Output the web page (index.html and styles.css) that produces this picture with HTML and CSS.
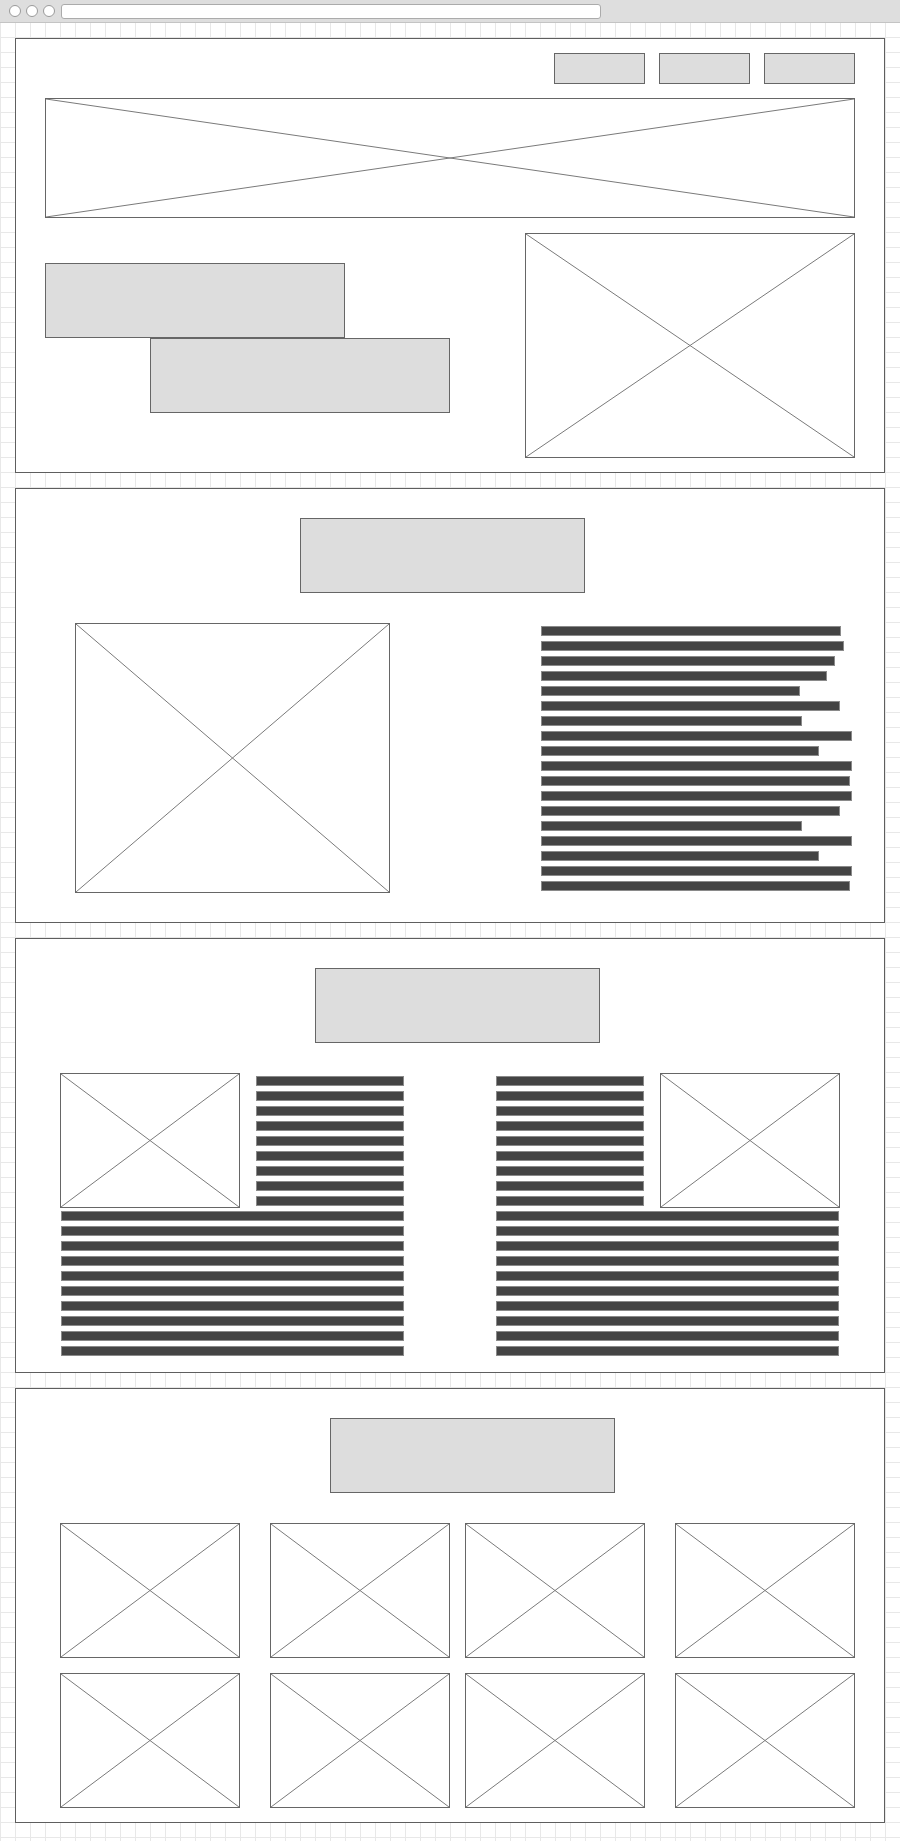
FILE: index.html
```html
<!DOCTYPE html>
<html lang="en">
  <head>
    <meta charset="utf-8" />
    <title>Wireframe</title>
    <link rel="stylesheet" href="styles.css">
  </head>
  <body>
    <div class="browser-bar">
      <span class="dot"></span>
      <span class="dot"></span>
      <span class="dot"></span>
      <span class="address"></span>
    </div>

    <main>

      <!-- header: nav + banner + hero -->
      <section class="Hero">
        <nav>
          <div class="box"></div>
          <div class="box"></div>
          <div class="box"></div>
        </nav>
        <div class="ph banner"><svg viewBox="0 0 100 100" preserveAspectRatio="none"><path d="M0 0L100 100M100 0L0 100"/></svg></div>
        <div class="hero-row">
          <div class="hero-titles">
            <div class="box"></div>
            <div class="box shifted"></div>
          </div>
          <div class="ph hero-img"><svg viewBox="0 0 100 100" preserveAspectRatio="none"><path d="M0 0L100 100M100 0L0 100"/></svg></div>
        </div>
      </section>

      <!-- image + text -->
      <section class="Feature">
        <div class="box title"></div>
        <div class="feature-row">
          <div class="ph feature-img"><svg viewBox="0 0 100 100" preserveAspectRatio="none"><path d="M0 0L100 100M100 0L0 100"/></svg></div>
          <div class="lines">
            <div class="bar" style="width:300px"></div>
            <div class="bar" style="width:303px"></div>
            <div class="bar" style="width:294px"></div>
            <div class="bar" style="width:286px"></div>
            <div class="bar" style="width:259px"></div>
            <div class="bar" style="width:299px"></div>
            <div class="bar" style="width:261px"></div>
            <div class="bar" style="width:311px"></div>
            <div class="bar" style="width:278px"></div>
            <div class="bar" style="width:311px"></div>
            <div class="bar" style="width:309px"></div>
            <div class="bar" style="width:311px"></div>
            <div class="bar" style="width:299px"></div>
            <div class="bar" style="width:261px"></div>
            <div class="bar" style="width:311px"></div>
            <div class="bar" style="width:278px"></div>
            <div class="bar" style="width:311px"></div>
            <div class="bar" style="width:309px"></div>
          </div>
        </div>
      </section>

      <!-- two articles, text wrapping around images -->
      <section class="Articles">
        <div class="box title"></div>
        <div class="articles-row">
          <article class="left">
            <div class="ph thumb"><svg viewBox="0 0 100 100" preserveAspectRatio="none"><path d="M0 0L100 100M100 0L0 100"/></svg></div>
            <div class="bar"></div><div class="bar"></div><div class="bar"></div><div class="bar"></div><div class="bar"></div>
            <div class="bar"></div><div class="bar"></div><div class="bar"></div><div class="bar"></div><div class="bar"></div>
            <div class="bar"></div><div class="bar"></div><div class="bar"></div><div class="bar"></div><div class="bar"></div>
            <div class="bar"></div><div class="bar"></div><div class="bar"></div><div class="bar"></div>
          </article>
          <article class="right">
            <div class="ph thumb"><svg viewBox="0 0 100 100" preserveAspectRatio="none"><path d="M0 0L100 100M100 0L0 100"/></svg></div>
            <div class="bar"></div><div class="bar"></div><div class="bar"></div><div class="bar"></div><div class="bar"></div>
            <div class="bar"></div><div class="bar"></div><div class="bar"></div><div class="bar"></div><div class="bar"></div>
            <div class="bar"></div><div class="bar"></div><div class="bar"></div><div class="bar"></div><div class="bar"></div>
            <div class="bar"></div><div class="bar"></div><div class="bar"></div><div class="bar"></div>
          </article>
        </div>
      </section>

      <!-- gallery -->
      <section class="Gallery">
        <div class="box title"></div>
        <div class="gallery-row">
          <div class="gallery-group">
            <div class="ph thumb"><svg viewBox="0 0 100 100" preserveAspectRatio="none"><path d="M0 0L100 100M100 0L0 100"/></svg></div>
            <div class="ph thumb"><svg viewBox="0 0 100 100" preserveAspectRatio="none"><path d="M0 0L100 100M100 0L0 100"/></svg></div>
            <div class="ph thumb"><svg viewBox="0 0 100 100" preserveAspectRatio="none"><path d="M0 0L100 100M100 0L0 100"/></svg></div>
            <div class="ph thumb"><svg viewBox="0 0 100 100" preserveAspectRatio="none"><path d="M0 0L100 100M100 0L0 100"/></svg></div>
          </div>
          <div class="gallery-group">
            <div class="ph thumb"><svg viewBox="0 0 100 100" preserveAspectRatio="none"><path d="M0 0L100 100M100 0L0 100"/></svg></div>
            <div class="ph thumb"><svg viewBox="0 0 100 100" preserveAspectRatio="none"><path d="M0 0L100 100M100 0L0 100"/></svg></div>
            <div class="ph thumb"><svg viewBox="0 0 100 100" preserveAspectRatio="none"><path d="M0 0L100 100M100 0L0 100"/></svg></div>
            <div class="ph thumb"><svg viewBox="0 0 100 100" preserveAspectRatio="none"><path d="M0 0L100 100M100 0L0 100"/></svg></div>
          </div>
        </div>
      </section>

    </main>
  </body>
</html>
```

FILE: styles.css
```css
* {
  box-sizing: border-box;
}

body {
  margin: 0;
  min-height: 1841px;
  font-family: "Liberation Sans", Arial, sans-serif;
  background-color: #fff;
  /* graph paper */
  background-image:
    linear-gradient(to right, #e8e8e8 1px, transparent 1px),
    linear-gradient(to bottom, #e8e8e8 1px, transparent 1px);
  background-size: 15px 15px;
  background-position: 0 7px;
}

.browser-bar {
  height: 23px;
  background: #dedede;
  border-bottom: 1px solid #c4c4c4;
  display: flex;
  align-items: center;
  gap: 5px;
  padding-left: 9px;
}
.browser-bar .dot {
  width: 12px;
  height: 12px;
  border-radius: 50%;
  background: #fff;
  border: 1px solid #9a9a9a;
}
.browser-bar .address {
  width: 540px;
  height: 15px;
  margin-left: 1px;
  background: #fff;
  border: 1px solid #ababab;
  border-radius: 3px;
}

main {
  padding: 15px 15px 0;
  display: flex;
  flex-direction: column;
  gap: 15px;
}
main section {
  background: #fff;
  border: 1px solid #5e5e5e;
  padding: 29px 29px 29px;
}

/* grey block = heading / button */
.box {
  background: #dddddd;
  border: 1px solid #666;
}

/* image placeholder with a cross */
.ph {
  background: #fff;
  border: 1px solid #666;
}
.ph svg {
  display: block;
  width: 100%;
  height: 100%;
}
.ph path {
  fill: none;
  stroke: #7a7a7a;
  stroke-width: 1;
  vector-effect: non-scaling-stroke;
}

/* text line */
.bar {
  height: 10px;
  background: #444;
  border: 1px solid #8a8a8a;
}

.title {
  width: 285px;
  height: 75px;
}

/* section 1 */
.Hero {
  padding-top: 14px;
  padding-bottom: 14px;
}
.Hero nav {
  display: flex;
  justify-content: flex-end;
  gap: 14px;
}
.Hero nav .box {
  width: 91px;
  height: 31px;
}
.banner {
  height: 120px;
  margin-top: 14px;
}
.hero-row {
  margin-top: 15px;
  display: flex;
  justify-content: space-between;
}
.hero-titles {
  padding-top: 30px;
}
.hero-titles .box {
  width: 300px;
  height: 75px;
}
.hero-titles .shifted {
  margin-left: 105px;
}
.hero-img {
  width: 330px;
  height: 225px;
}

/* section 2 */
.Feature .title {
  margin-left: 255px;
}
.feature-row {
  margin-top: 30px;
  display: flex;
  align-items: flex-start;
  padding-left: 30px;
}
.feature-img {
  width: 315px;
  height: 270px;
}
.Feature .lines {
  margin-left: auto;
  width: 314px;
  padding-top: 3px;
}
.Feature .lines .bar {
  margin-bottom: 5px;
}
.Feature .lines .bar:last-child {
  margin-bottom: 0;
}

/* section 3 */
.Articles {
  padding-bottom: 16px;
}
.Articles .title {
  margin-left: 270px;
}
.articles-row {
  margin-top: 30px;
  display: flex;
  gap: 92px;
  padding-left: 16px;
}
.articles-row article {
  width: 343px;
  padding-top: 3px;
}
.articles-row .thumb {
  width: 180px;
  height: 135px;
  margin-top: -3px;
}
.articles-row .left .thumb {
  float: left;
  margin-left: -1px;
  margin-right: 16px;
}
.articles-row .right .thumb {
  float: right;
  margin-right: -1px;
  margin-left: 16px;
}
.articles-row .bar {
  display: flow-root; /* shrink next to the float */
  margin-bottom: 5px;
}
.articles-row .bar:last-child {
  margin-bottom: 0;
}

/* section 4 */
.Gallery {
  padding-bottom: 14px;
}
.Gallery .title {
  margin-left: 285px;
}
.gallery-row {
  margin-top: 30px;
  padding-left: 15px;
  display: flex;
  gap: 15px;
}
.gallery-group {
  display: grid;
  grid-template-columns: 180px 180px;
  column-gap: 30px;
  row-gap: 15px;
}
.gallery-group .thumb {
  height: 135px;
}
```
